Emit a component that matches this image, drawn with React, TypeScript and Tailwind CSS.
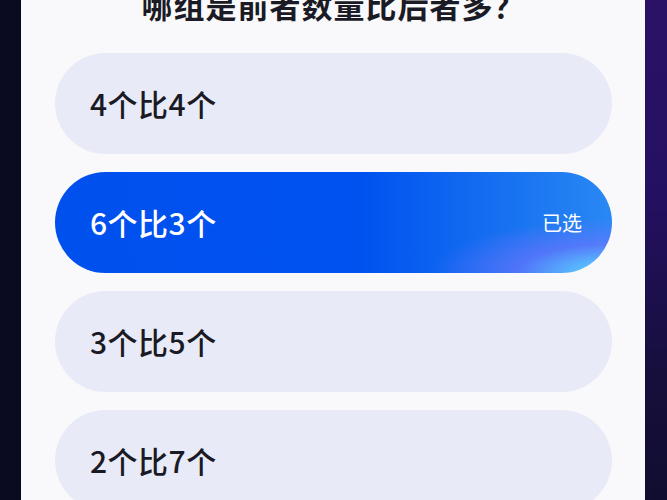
export default function App() {
  const opts = [
    { t: "4个比4个", sel: false },
    { t: "6个比3个", sel: true },
    { t: "3个比5个", sel: false },
    { t: "2个比7个", sel: false },
  ];
  return (
    <div className="w-[667px] h-[500px] overflow-hidden flex bg-[#0b0c22] font-['Noto_Sans_CJK_SC',sans-serif]">
      <div className="w-[21px] shrink-0 bg-[#0a0b20]" />
      <div className="w-[624px] shrink-0 bg-[#f9f9fb] flex flex-col px-[34px] pr-[33px]">
        <div className="-mt-[15px] h-[40px] leading-[40px] text-center text-[31px] font-bold text-[#1b1b25] tracking-[1px]">
          哪组是前者数量比后者多？
        </div>
        <div className="mt-[28px] flex flex-col gap-[18px]">
          {opts.map((o) =>
            o.sel ? (
              <div
                key={o.t}
                className="h-[101px] rounded-full flex items-center justify-between pl-[35px] pr-[30px] text-white bg-[radial-gradient(ellipse_45%_75%_at_100%_100%,rgba(95,230,255,0.95)_0%,rgba(115,115,255,0.6)_38%,rgba(60,90,255,0)_72%),linear-gradient(90deg,#0050ee_0%,#0052f0_55%,#1670f0_80%,#2a88f4_100%)]"
              >
                <span className="text-[30px] font-medium tracking-[0.5px]">{o.t}</span>
                <span className="text-[20px]">已选</span>
              </div>
            ) : (
              <div
                key={o.t}
                className="h-[101px] rounded-full flex items-center pl-[35px] bg-[#e9eaf8] text-[#1a1a24]"
              >
                <span className="text-[30px] font-medium tracking-[0.5px]">{o.t}</span>
              </div>
            )
          )}
        </div>
      </div>
      <div className="w-[22px] shrink-0 bg-[linear-gradient(180deg,#2b1267_0%,#241060_40%,#160f3c_75%,#110d30_100%)]" />
    </div>
  );
}
